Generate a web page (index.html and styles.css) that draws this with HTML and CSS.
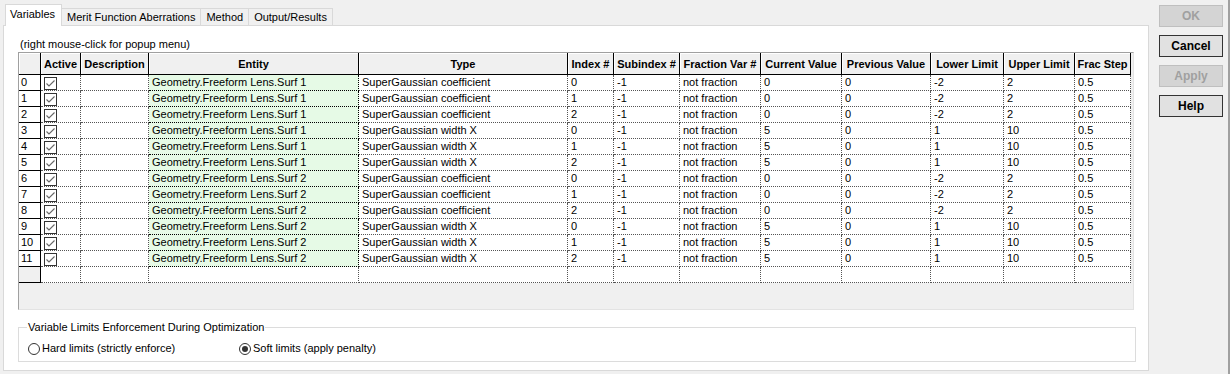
FILE: index.html
```html
<!DOCTYPE html>
<html lang="en">
<head>
  <meta charset="UTF-8" />
  <title>Optimization Settings</title>
  <link rel="stylesheet" href="styles.css">
</head>
<body>
  <div class="window">
    <div class="dialog">
      <div class="tabs">
        <div class="tab active">Variables</div>
        <div class="tab">Merit Function Aberrations</div>
        <div class="tab">Method</div>
        <div class="tab">Output/Results</div>
      </div>

      <div class="panel">
        <p class="hint">(right mouse-click for popup menu)</p>

        <div class="grid">
          <table>
            <colgroup>
              <col style="width:22px">
              <col style="width:40px">
              <col style="width:68px">
              <col style="width:210px">
              <col style="width:209px">
              <col style="width:46px">
              <col style="width:66px">
              <col style="width:81px">
              <col style="width:81px">
              <col style="width:89px">
              <col style="width:73px">
              <col style="width:71px">
              <col style="width:56px">
            </colgroup>
            <thead>
              <tr>
                <th></th>
                <th>Active</th>
                <th>Description</th>
                <th>Entity</th>
                <th>Type</th>
                <th>Index #</th>
                <th>Subindex #</th>
                <th>Fraction Var #</th>
                <th>Current Value</th>
                <th>Previous Value</th>
                <th>Lower Limit</th>
                <th>Upper Limit</th>
                <th>Frac Step</th>
              </tr>
            </thead>
            <tbody>
              <tr>
                <td class="num">0</td>
                <td><svg class="check" viewBox="0 0 13 13"><rect x="0.5" y="0.5" width="12" height="12"/><path d="M2.5 6.5 L5 9 L10.5 3.5"/></svg></td>
                <td></td>
                <td class="entity">Geometry.Freeform Lens.Surf 1</td><td>SuperGaussian coefficient</td>
                <td>0</td><td>-1</td><td>not fraction</td><td>0</td><td>0</td><td>-2</td><td>2</td><td>0.5</td>
              </tr>
              <tr>
                <td class="num">1</td>
                <td><svg class="check" viewBox="0 0 13 13"><rect x="0.5" y="0.5" width="12" height="12"/><path d="M2.5 6.5 L5 9 L10.5 3.5"/></svg></td>
                <td></td>
                <td class="entity">Geometry.Freeform Lens.Surf 1</td><td>SuperGaussian coefficient</td>
                <td>1</td><td>-1</td><td>not fraction</td><td>0</td><td>0</td><td>-2</td><td>2</td><td>0.5</td>
              </tr>
              <tr>
                <td class="num">2</td>
                <td><svg class="check" viewBox="0 0 13 13"><rect x="0.5" y="0.5" width="12" height="12"/><path d="M2.5 6.5 L5 9 L10.5 3.5"/></svg></td>
                <td></td>
                <td class="entity">Geometry.Freeform Lens.Surf 1</td><td>SuperGaussian coefficient</td>
                <td>2</td><td>-1</td><td>not fraction</td><td>0</td><td>0</td><td>-2</td><td>2</td><td>0.5</td>
              </tr>
              <tr>
                <td class="num">3</td>
                <td><svg class="check" viewBox="0 0 13 13"><rect x="0.5" y="0.5" width="12" height="12"/><path d="M2.5 6.5 L5 9 L10.5 3.5"/></svg></td>
                <td></td>
                <td class="entity">Geometry.Freeform Lens.Surf 1</td><td>SuperGaussian width X</td>
                <td>0</td><td>-1</td><td>not fraction</td><td>5</td><td>0</td><td>1</td><td>10</td><td>0.5</td>
              </tr>
              <tr>
                <td class="num">4</td>
                <td><svg class="check" viewBox="0 0 13 13"><rect x="0.5" y="0.5" width="12" height="12"/><path d="M2.5 6.5 L5 9 L10.5 3.5"/></svg></td>
                <td></td>
                <td class="entity">Geometry.Freeform Lens.Surf 1</td><td>SuperGaussian width X</td>
                <td>1</td><td>-1</td><td>not fraction</td><td>5</td><td>0</td><td>1</td><td>10</td><td>0.5</td>
              </tr>
              <tr>
                <td class="num">5</td>
                <td><svg class="check" viewBox="0 0 13 13"><rect x="0.5" y="0.5" width="12" height="12"/><path d="M2.5 6.5 L5 9 L10.5 3.5"/></svg></td>
                <td></td>
                <td class="entity">Geometry.Freeform Lens.Surf 1</td><td>SuperGaussian width X</td>
                <td>2</td><td>-1</td><td>not fraction</td><td>5</td><td>0</td><td>1</td><td>10</td><td>0.5</td>
              </tr>
              <tr>
                <td class="num">6</td>
                <td><svg class="check" viewBox="0 0 13 13"><rect x="0.5" y="0.5" width="12" height="12"/><path d="M2.5 6.5 L5 9 L10.5 3.5"/></svg></td>
                <td></td>
                <td class="entity">Geometry.Freeform Lens.Surf 2</td><td>SuperGaussian coefficient</td>
                <td>0</td><td>-1</td><td>not fraction</td><td>0</td><td>0</td><td>-2</td><td>2</td><td>0.5</td>
              </tr>
              <tr>
                <td class="num">7</td>
                <td><svg class="check" viewBox="0 0 13 13"><rect x="0.5" y="0.5" width="12" height="12"/><path d="M2.5 6.5 L5 9 L10.5 3.5"/></svg></td>
                <td></td>
                <td class="entity">Geometry.Freeform Lens.Surf 2</td><td>SuperGaussian coefficient</td>
                <td>1</td><td>-1</td><td>not fraction</td><td>0</td><td>0</td><td>-2</td><td>2</td><td>0.5</td>
              </tr>
              <tr>
                <td class="num">8</td>
                <td><svg class="check" viewBox="0 0 13 13"><rect x="0.5" y="0.5" width="12" height="12"/><path d="M2.5 6.5 L5 9 L10.5 3.5"/></svg></td>
                <td></td>
                <td class="entity">Geometry.Freeform Lens.Surf 2</td><td>SuperGaussian coefficient</td>
                <td>2</td><td>-1</td><td>not fraction</td><td>0</td><td>0</td><td>-2</td><td>2</td><td>0.5</td>
              </tr>
              <tr>
                <td class="num">9</td>
                <td><svg class="check" viewBox="0 0 13 13"><rect x="0.5" y="0.5" width="12" height="12"/><path d="M2.5 6.5 L5 9 L10.5 3.5"/></svg></td>
                <td></td>
                <td class="entity">Geometry.Freeform Lens.Surf 2</td><td>SuperGaussian width X</td>
                <td>0</td><td>-1</td><td>not fraction</td><td>5</td><td>0</td><td>1</td><td>10</td><td>0.5</td>
              </tr>
              <tr>
                <td class="num">10</td>
                <td><svg class="check" viewBox="0 0 13 13"><rect x="0.5" y="0.5" width="12" height="12"/><path d="M2.5 6.5 L5 9 L10.5 3.5"/></svg></td>
                <td></td>
                <td class="entity">Geometry.Freeform Lens.Surf 2</td><td>SuperGaussian width X</td>
                <td>1</td><td>-1</td><td>not fraction</td><td>5</td><td>0</td><td>1</td><td>10</td><td>0.5</td>
              </tr>
              <tr>
                <td class="num">11</td>
                <td><svg class="check" viewBox="0 0 13 13"><rect x="0.5" y="0.5" width="12" height="12"/><path d="M2.5 6.5 L5 9 L10.5 3.5"/></svg></td>
                <td></td>
                <td class="entity">Geometry.Freeform Lens.Surf 2</td><td>SuperGaussian width X</td>
                <td>2</td><td>-1</td><td>not fraction</td><td>5</td><td>0</td><td>1</td><td>10</td><td>0.5</td>
              </tr>
              <tr class="blank">
                <td class="num"></td><td></td><td></td><td></td><td></td><td></td><td></td>
                <td></td><td></td><td></td><td></td><td></td><td></td>
              </tr>
            </tbody>
          </table>
        </div>

        <fieldset class="limits">
          <legend>Variable Limits Enforcement During Optimization</legend>
          <label class="radio"><span class="dot"></span>Hard limits (strictly enforce)</label>
          <label class="radio checked"><span class="dot"></span>Soft limits (apply penalty)</label>
        </fieldset>
      </div>
    </div>

    <div class="buttons">
      <button disabled>OK</button>
      <button>Cancel</button>
      <button disabled>Apply</button>
      <button>Help</button>
    </div>
  </div>
</body>
</html>
```

FILE: styles.css
```css
:root {
  --face: #f0f0f0;
  --edge: #d9d9d9;
  --shadow: #a0a0a0;
  --text: #000000;
  --entity: #e6fae6;
  --disabled: #a0a0a0;
}

* {
  box-sizing: border-box;
  margin: 0;
  padding: 0;
}

body {
  width: 1230px;
  height: 374px;
  overflow: hidden;
  background-color: var(--face);
  color: var(--text);
  font-family: "Liberation Sans", Arial, sans-serif;
  font-size: 11px;
}

.window {
  display: flex;
  height: 374px;
  border-right: 2px solid var(--shadow);
  width: 1230px;
}

.dialog {
  width: 1146px;
  margin-left: 3px;
}

/* tab strip */
.tabs {
  display: flex;
  align-items: flex-end;
  height: 21px;
  margin-top: 4px;
  padding-left: 2px;
}

.tab {
  height: 17px;
  line-height: 16px;
  padding: 0 5px;
  border: 1px solid var(--edge);
  border-bottom: none;
  margin-left: -1px;
  background-color: var(--face);
  white-space: nowrap;
}

.tab:first-child {
  margin-left: 0;
}

.tab.active {
  position: relative;
  height: 22px;
  line-height: 18px;
  margin-bottom: -1px;
  background-color: #ffffff;
  padding: 0 6px 0 4px;
}

.panel {
  height: 346px;
  background-color: #ffffff;
  border: 1px solid var(--edge);
  padding-left: 14px;
}

.hint {
  margin-top: 11px;
  padding-left: 2px;
  line-height: 14px;
}

/* variables grid */
.grid {
  width: 1116px;
  height: 258px;
  margin-top: 1px;
  background-color: var(--face);
  border: 1px solid;
  border-color: var(--shadow) #e3e3e3 #e3e3e3 var(--shadow);
  overflow: hidden;
}

table {
  width: 1112px;
  table-layout: fixed;
  border-collapse: separate;
  border-spacing: 0;
}

thead tr {
  height: 22px;
}

th {
  padding: 0;
  background-color: var(--face);
  border-right: 1px solid #000000;
  border-bottom: 1px solid #000000;
  box-shadow: inset 1px 1px #ffffff;
  font-weight: bold;
  text-align: center;
  white-space: nowrap;
  overflow: hidden;
}

tbody tr {
  height: 16px;
}

td {
  padding: 0 0 0 3px;
  line-height: 15px;
  background-color: #ffffff;
  border-right: 1px dotted #555555;
  border-bottom: 1px dotted #555555;
  white-space: nowrap;
  overflow: hidden;
}

td.num {
  padding-left: 2px;
  border-right: 1px solid #000000;
  border-bottom: 1px solid #000000;
}

td.entity {
  padding-left: 3px;
  background-color: var(--entity);
  border-right-color: #000000;
  border-bottom-color: #000000;
}

.blank td.num {
  background-color: var(--face);
}

.check {
  display: block;
  width: 13px;
  height: 13px;
  margin-top: 1px;
}

.check rect {
  fill: #ffffff;
  stroke: #333333;
}

.check path {
  fill: none;
  stroke: #666666;
  stroke-width: 1.1;
}

/* limits group */
.limits {
  width: 1118px;
  margin-top: 10px;
  padding: 8px 8px 6px 8px;
  border: 1px solid #dcdcdc;
  display: flex;
  align-items: center;
}

.limits legend {
  padding: 0 1px;
  line-height: 14px;
}

.radio {
  display: inline-flex;
  align-items: center;
  gap: 2px;
  line-height: 13px;
  margin-left: 1px;
  width: 210px;
}

.dot {
  width: 12px;
  height: 12px;
  border: 1px solid #333333;
  border-radius: 50%;
  background-color: #ffffff;
  position: relative;
}

.radio.checked .dot::after {
  content: "";
  position: absolute;
  left: 2px;
  top: 2px;
  width: 6px;
  height: 6px;
  border-radius: 50%;
  background-color: #333333;
}

/* command buttons */
.buttons {
  display: flex;
  flex-direction: column;
  gap: 8px;
  margin-left: 10px;
  padding-top: 5px;
}

button {
  width: 64px;
  height: 22px;
  font-family: "Liberation Sans", Arial, sans-serif;
  font-size: 12px;
  font-weight: bold;
  color: #000000;
  background-color: #e1e1e1;
  border: 1px solid #333333;
}

button:disabled {
  color: var(--disabled);
  background-color: #d4d4d4;
  border-color: #bfbfbf;
}
```
